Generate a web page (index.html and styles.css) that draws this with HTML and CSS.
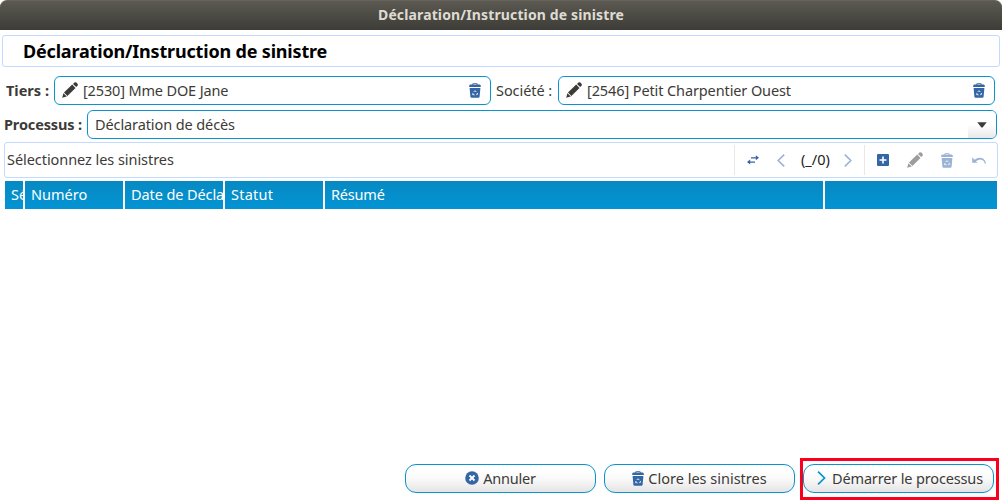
FILE: index.html
```html
<!DOCTYPE html>
<html lang="fr">
<head>
<meta charset="utf-8">
<title>Déclaration/Instruction de sinistre</title>
<link rel="stylesheet" href="styles.css">
</head>
<body>
<svg class="defs" aria-hidden="true">
  <symbol id="pencil" viewBox="0 0 16 16"><path d="M0.2 15.8 1.4 11.2 4.8 14.6zM2 10.4 10.2 2.6 13.5 5.9 5.4 13.9zM11 1.9 12.4.6Q13.4-.2 14.4.6L15.5 1.7Q16.3 2.7 15.5 3.7L14.2 5.1z"/></symbol>
  <symbol id="bin" viewBox="0 0 12 15"><path fill-rule="evenodd" d="M3.3 1.6V1.2Q3.3.3 4.3.3h3.4q1 0 1 .9v.4h2Q11.8 1.7 11.8 2.9v1.2H.2V2.9Q.2 1.7 1.3 1.6zM4.3 1.6h3.4v-.5H4.3zM.6 4.9h10.8l-.8 8.8q-.1 1.1-1.2 1.1H2.6q-1.1 0-1.2-1.1z"/><path d="M4.7 9 6 7.7 7.3 9M8.2 9.9l.4 1.4-1.4.5M5.6 11.9 3.6 11.6l.4-1.6" fill="none" stroke="#fff" stroke-width=".85"/></symbol>
  <symbol id="left" viewBox="0 0 8 13"><path d="M7.2.6 1.2 6.5 7.2 12.4" fill="none" stroke="currentColor" stroke-width="1.6"/></symbol>
  <symbol id="right" viewBox="0 0 8 13"><path d="M.8.6 6.8 6.5.8 12.4" fill="none" stroke="currentColor" stroke-width="1.6"/></symbol>
</svg>
<header class="titlebar"><span class="t window-title">Déclaration/Instruction de sinistre</span></header>
<main class="content">
  <h1 class="heading"><span class="heading-text">Déclaration/Instruction de sinistre</span></h1>
  <div class="row parties">
    <label class="label-tiers"><b class="t tiers">Tiers :</b></label>
    <div class="field"><svg class="pencil"><use href="#pencil"/></svg><span class="t tiers-value">[2530] Mme DOE Jane</span><svg class="bin"><use href="#bin"/></svg></div>
    <label class="label-societe"><span class="t societe">Société :</span></label>
    <div class="field"><svg class="pencil"><use href="#pencil"/></svg><span class="t societe-value">[2546] Petit Charpentier Ouest</span><svg class="bin"><use href="#bin"/></svg></div>
  </div>
  <div class="row process">
    <label class="label-process"><b class="t processus">Processus :</b></label>
    <div class="select"><span class="t process-value">Déclaration de décès</span><span class="select-arrow"><svg viewBox="0 0 10 6"><path d="M.3.3h9.4L6 5Q5 6 4 5z"/></svg></span></div>
  </div>
  <div class="toolbar">
    <span class="t toolbar-title">Sélectionnez les sinistres</span>
    <div class="nav">
      <svg class="swap" viewBox="0 0 12 10"><path d="M4 2.2h4.8V.3L12 2.8 8.8 5.3V3.5H4zM8 6.4H3.2V4.5L0 7l3.2 2.5V7.7H8z"/></svg>
      <svg class="chevron faded prev"><use href="#left"/></svg>
      <span class="t counter">(_/0)</span>
      <svg class="chevron faded next"><use href="#right"/></svg>
    </div>
    <div class="actions">
      <svg class="add" viewBox="0 0 12 12"><rect width="12" height="12" rx="1"/><path d="M6 2.5v7M2.5 6h7" stroke="#fff" stroke-width="1.6"/></svg>
      <svg class="pencil disabled"><use href="#pencil"/></svg>
      <svg class="bin faded"><use href="#bin"/></svg>
      <svg class="undo faded" viewBox="0 0 14 7"><path d="M.2.2V5.8H5.6L3.9 4.2Q8 1.4 10.8 3.2 12.3 4.2 12.9 6.8L14 6.5Q13.4 3.3 11.3 1.8 7.2-.7 2.4 2.8z"/></svg>
    </div>
  </div>
  <div class="table-head">
    <div><span class="t">Sélection</span></div><div><span class="t">Numéro</span></div><div><span class="t date">Date de Déclaration</span></div><div><span class="t statut">Statut</span></div><div><span class="t resume">Résumé</span></div><div></div>
  </div>
  <div class="table-body"></div>
  <footer class="buttons">
    <button class="button"><svg class="cancel" viewBox="0 0 14 14"><circle cx="7" cy="7" r="6.8"/><path d="m4.5 4.5 5 5m0-5-5 5" stroke="#fff" stroke-width="1.8"/></svg><span class="t annuler">Annuler</span></button>
    <button class="button"><svg class="bin"><use href="#bin"/></svg><span class="t clore">Clore les sinistres</span></button>
    <div class="highlight"><button class="button"><svg class="go"><use href="#right"/></svg><span class="t demarrer">Démarrer le processus</span></button></div>
  </footer>
</main>
</body>
</html>
```
FILE: styles.css
```css
* { box-sizing: border-box; }
body {
  margin: 0;
  width: 1002px;
  height: 501px;
  display: flex;
  flex-direction: column;
  overflow: hidden;
  background: #fff;
  color: #3c3b37;
  font: 14.5px/20px "Noto Sans", "Open Sans", sans-serif;
}
svg { display: block; flex: none; fill: currentColor; overflow: visible; }
.defs { position: absolute; width: 0; height: 0; }
.t { white-space: nowrap; padding-bottom: 2px; }
.titlebar {
  height: 30px;
  flex: none;
  display: flex;
  justify-content: center;
  align-items: center;
  border-top: 1px solid #66645a;
  border-radius: 7px 7px 0 0;
  background: linear-gradient(#5b5952, #3d3c36);
  color: #dfdbd2;
  font-weight: 700;
  font-size: 14px;
  letter-spacing: 0.13px;
}
.content { flex: 1; display: flex; flex-direction: column; padding: 5px 0 0; }
.heading {
  margin: 0 2px;
  height: 32px;
  display: flex;
  align-items: center;
  border: 1px solid #c3d9ff;
  border-radius: 3px;
  padding-left: 20px;
  color: #000;
  font-size: 18px;
  font-weight: 700;
  letter-spacing: -0.18px;
}
.row { display: flex; align-items: center; height: 29px; flex: none; }
.row label { display: flex; }
.parties { margin-top: 9px; }
.process { margin-top: 5px; }
.label-tiers { width: 54px; padding-left: 6px; }
.label-societe { width: 67px; padding-left: 5px; }
.label-process { width: 87px; padding-left: 4px; }
.tiers-value { letter-spacing: -0.15px; }
.societe { letter-spacing: -0.06px; }
.societe-value { letter-spacing: -0.11px; }
.processus { letter-spacing: -0.15px; }
.process-value { letter-spacing: -0.1px; }
.toolbar-title { letter-spacing: -0.06px; }
.date { letter-spacing: -0.1px; }
.statut { letter-spacing: 0.25px; }
.resume { letter-spacing: -0.2px; }
.annuler { letter-spacing: -0.2px; }
.demarrer { letter-spacing: -0.15px; }
.field {
  width: 437px;
  height: 29px;
  display: flex;
  align-items: center;
  border: 1px solid #0a94cf;
  border-radius: 6px;
  padding: 0 9px 0 7px;
}
.field .pencil { margin-right: 5px; margin-bottom: 1px; }
.field .bin { margin-left: auto; }
.pencil { width: 16px; height: 16px; }
.bin { width: 12px; height: 15px; color: #3465a4; }
.select {
  width: 910px;
  height: 29px;
  display: flex;
  align-items: center;
  border: 1px solid #0a94cf;
  border-radius: 6px;
  padding-left: 7px;
  overflow: hidden;
}
.select-arrow {
  width: 28px;
  height: 27px;
  margin-left: auto;
  display: flex;
  align-items: center;
  justify-content: center;
  padding-top: 1px;
  background: linear-gradient(#fff 50%, #e8e8e8);
}
.select-arrow svg { width: 10px; height: 6px; }
.toolbar {
  margin: 3px 4px 0;
  height: 36px;
  flex: none;
  display: flex;
  align-items: center;
  border: 1px solid #c3d9ff;
  border-radius: 3px;
  padding-left: 2px;
}
.nav, .actions { height: 30px; display: flex; align-items: center; border-left: 1px solid #e8e8e8; color: #3465a4; }
.nav { margin-left: auto; width: 130px; padding-left: 12px; }
.actions { width: 133px; padding-left: 12px; }
.swap { width: 12px; height: 10px; }
.chevron { width: 8px; height: 13px; }
.prev { margin-left: 18px; }
.counter { margin-left: 16px; width: 31px; color: #222; }
.next { margin-left: 12px; }
.faded { color: #9ab3d4; }
.pencil.disabled { color: #9d9d9b; margin-left: 18px; }
.add { width: 12px; height: 12px; }
.actions .bin { margin-left: 18px; color: #9ab3d4; }
.undo { width: 14px; height: 7px; margin-left: 19px; }
.table-head {
  margin: 3px 5px 0;
  height: 28px;
  flex: none;
  display: grid;
  grid-template-columns: 18px 98px 98px 98px 498px 1fr;
  gap: 2px;
  color: #fff;
}
.table-head div {
  display: flex;
  align-items: center;
  padding-left: 6px;
  overflow: hidden;
  background: linear-gradient(#0789c2, #0394d4);
}
.table-body { flex: 1; min-height: 0; }
.buttons { height: 43px; flex: none; display: flex; gap: 8px; padding: 6px 0 0 405px; }
.button {
  width: 191px;
  height: 29px;
  display: flex;
  align-items: center;
  justify-content: center;
  gap: 4px;
  border: 1px solid #0a94cf;
  border-radius: 11px;
  padding: 0;
  background: linear-gradient(#fff 20%, #f8f8f8 55%, #e4e4e4);
  color: #3c3b37;
  font: inherit;
}
.highlight { width: 199px; height: 42px; margin: -6px 0 0 -3px; border: 3px solid #f9001e; padding-top: 3px; }
.highlight .button { gap: 6px; padding-left: 3px; }
.cancel { width: 14px; height: 14px; color: #3465a4; margin-bottom: 2px; }
.button .bin { margin-bottom: 1px; }
.go { width: 9px; height: 14px; color: #0a94cf; margin-bottom: 1px; }
```
